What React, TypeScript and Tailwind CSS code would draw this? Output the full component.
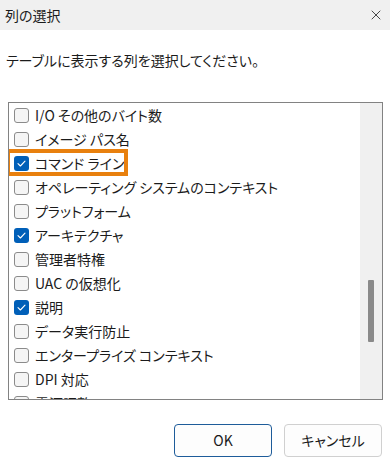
import { X } from 'lucide-react';

type Column = { label: string; checked: boolean; highlight?: boolean };

const columns: Column[] = [
  { label: 'I/O その他のバイト数', checked: false },
  { label: 'イメージ パス名', checked: false },
  { label: 'コマンド ライン', checked: true, highlight: true },
  { label: 'オペレーティング システムのコンテキスト', checked: false },
  { label: 'プラットフォーム', checked: false },
  { label: 'アーキテクチャ', checked: true },
  { label: '管理者特権', checked: false },
  { label: 'UAC の仮想化', checked: false },
  { label: '説明', checked: true },
  { label: 'データ実行防止', checked: false },
  { label: 'エンタープライズ コンテキスト', checked: false },
  { label: 'DPI 対応', checked: false },
  { label: '電源調整', checked: false },
];

function Checkbox({ checked }: { checked: boolean }) {
  if (checked) {
    return (
      <span className="w-[15px] h-[15px] shrink-0 rounded-[3px] bg-[#005fb8] flex items-center justify-center">
        <svg width="9" height="7" viewBox="0 0 9 7" fill="none">
          <path d="M1 3.6 L3.4 6 L8 1.2" stroke="white" strokeWidth="1.1" strokeLinecap="round" strokeLinejoin="round" />
        </svg>
      </span>
    );
  }
  return <span className="w-[15px] h-[15px] shrink-0 rounded-[3px] border border-[#8b8b8b] bg-[#f5f5f5]" />;
}

export default function App() {
  return (
    <div
      className="w-[390px] h-[465px] bg-white text-[#1b1b1b] text-[14px] flex flex-col overflow-hidden [font-feature-settings:'palt']"
      style={{ fontFamily: '"Noto Sans CJK JP", "Noto Sans", sans-serif' }}
    >
      {/* Title bar */}
      <div className="h-[30px] bg-[#f0f0f0] flex items-center justify-between pl-[5px] pr-[6px] shrink-0">
        <span className="leading-none">列の選択</span>
        <X size={16} strokeWidth={1.2} className="text-[#1b1b1b]" />
      </div>

      <p className="pl-[6px] mt-[21px] leading-[18px]">テーブルに表示する列を選択してください。</p>

      {/* Column list */}
      <div className="mt-[33px] ml-[8px] mr-[7px] h-[298px] shrink-0 border border-[#828282] flex overflow-hidden">
        <div className="flex-1 flex flex-col">
          {columns.map((c) => (
            <div key={c.label} className="h-[24px] shrink-0 flex items-center pl-[5px] relative">
              {c.highlight && (
                <span className="absolute left-[-3px] top-[-2px] w-[122px] h-[27px] border-[4px] border-[#e8800e]" />
              )}
              <Checkbox checked={c.checked} />
              <span className="ml-[6px] whitespace-nowrap leading-none">{c.label}</span>
            </div>
          ))}
        </div>
        <div className="w-[22px] bg-[#f0f0f0] flex justify-center pt-[177px] shrink-0">
          <div className="w-[6px] h-[62px] bg-[#8a8a8a] rounded-[1px]" />
        </div>
      </div>

      {/* Buttons */}
      <div className="flex justify-end gap-[12px] pr-[8px] mt-[24px]">
        <button className="w-[98px] h-[33px] rounded-[4px] border border-[#1e5c9a] bg-[#fdfdfd] text-[14px]">OK</button>
        <button className="w-[98px] h-[33px] rounded-[4px] border border-[#d0d0d0] bg-[#fdfdfd] text-[14px]">キャンセル</button>
      </div>
    </div>
  );
}
